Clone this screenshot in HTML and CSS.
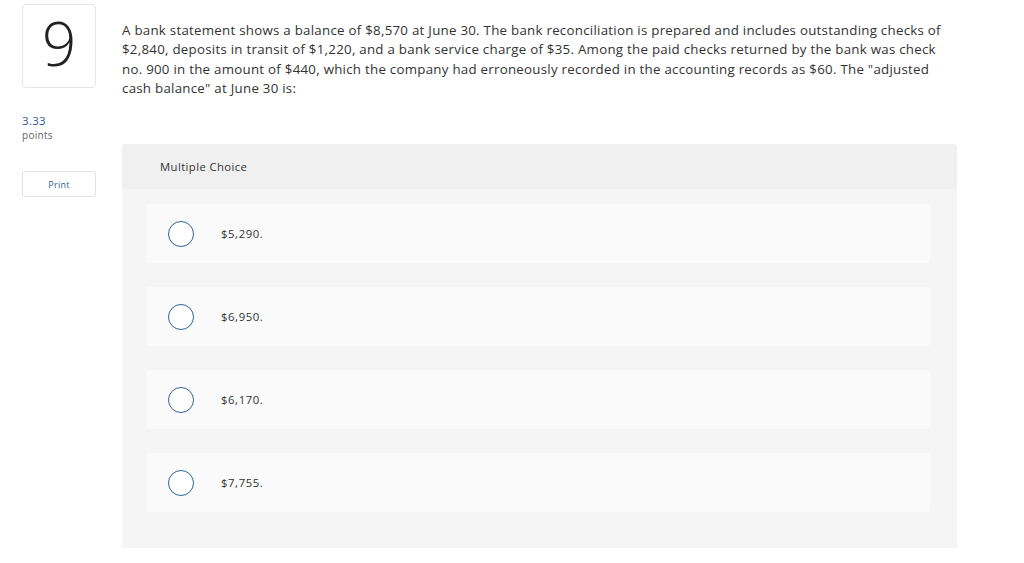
FILE: index.html
```html
<!DOCTYPE html>
<html>
<head>
<meta charset="utf-8">
<link rel="stylesheet" href="styles.css">
</head>
<body>
<div class="page">
  <aside class="side">
    <div class="qnum">9</div>
    <div class="points"><div class="pval">3.33</div><div class="plabel">points</div></div>
    <button class="print">Print</button>
  </aside>
  <main class="main">
    <p class="question">A bank statement shows a balance of $8,570 at June 30. The bank reconciliation is prepared and includes outstanding checks of $2,840, deposits in transit of $1,220, and a bank service charge of $35. Among the paid checks returned by the bank was check no. 900 in the amount of $440, which the company had erroneously recorded in the accounting records as $60. The "adjusted cash balance" at June 30 is:</p>
    <section class="panel">
      <div class="panel-head">Multiple Choice</div>
      <div class="panel-body">
        <div class="option"><span class="radio"></span><span class="otext">$5,290.</span></div>
        <div class="option"><span class="radio"></span><span class="otext">$6,950.</span></div>
        <div class="option"><span class="radio"></span><span class="otext">$6,170.</span></div>
        <div class="option"><span class="radio"></span><span class="otext">$7,755.</span></div>
      </div>
    </section>
  </main>
</div>
</body>
</html>
```
FILE: styles.css
```css
html, body { margin: 0; padding: 0; background: #fff; }
body { font-family: "Open Sans", sans-serif; color: #333; }
.page { display: flex; padding: 4px 0 0 22px; }
.side { width: 74px; display: flex; flex-direction: column; }
.qnum {
  box-sizing: border-box; width: 74px; height: 84px;
  border: 1px solid #e6e6e6; border-radius: 4px;
  display: flex; align-items: center; justify-content: center;
  font-family: "Open Sans", sans-serif; font-size: 60px; font-weight: 300; color: #222;
  line-height: 1; padding-bottom: 6px;
}
.points { margin-top: 25px; }
.pval { font-size: 11.5px; letter-spacing: 0.3px; color: #2d5d98; line-height: 15px; }
.plabel { font-size: 10px; letter-spacing: 0.3px; color: #666; line-height: 14px; }
.print {
  margin-top: 29px; box-sizing: border-box; width: 74px; height: 26px;
  border: 1px solid #e3e3e3; border-radius: 3px; background: #fff;
  font-family: inherit; font-size: 9px; letter-spacing: 0.3px; color: #2d5d98; padding: 0; cursor: pointer;
}
.main { margin-left: 26px; width: 835px; }
.question { margin: 17px 0 0; font-size: 13.3px; letter-spacing: 0.26px; line-height: 19.3px; color: #333; width: 830px; }
.panel { margin-top: 46px; border-radius: 3px 3px 0 0; overflow: hidden; }
.panel-head {
  background: #f0f0f0; height: 45px; box-sizing: border-box;
  padding-left: 38px; display: flex; align-items: center;
  font-size: 11.3px; letter-spacing: 0.4px; color: #333;
}
.panel-body {
  background: #f5f5f5; padding: 15px 27px 36px 24px;
  display: flex; flex-direction: column; gap: 24px;
}
.option {
  background: #fafafa; height: 59px; border-radius: 2px;
  display: flex; align-items: center; padding-left: 22px;
}
.radio {
  box-sizing: border-box; width: 26px; height: 26px; border-radius: 50%;
  border: 1.5px solid #2f6299; background: #fff; flex: none;
}
.otext { margin-left: 27px; font-size: 11.3px; letter-spacing: 0.6px; color: #333; }
```
